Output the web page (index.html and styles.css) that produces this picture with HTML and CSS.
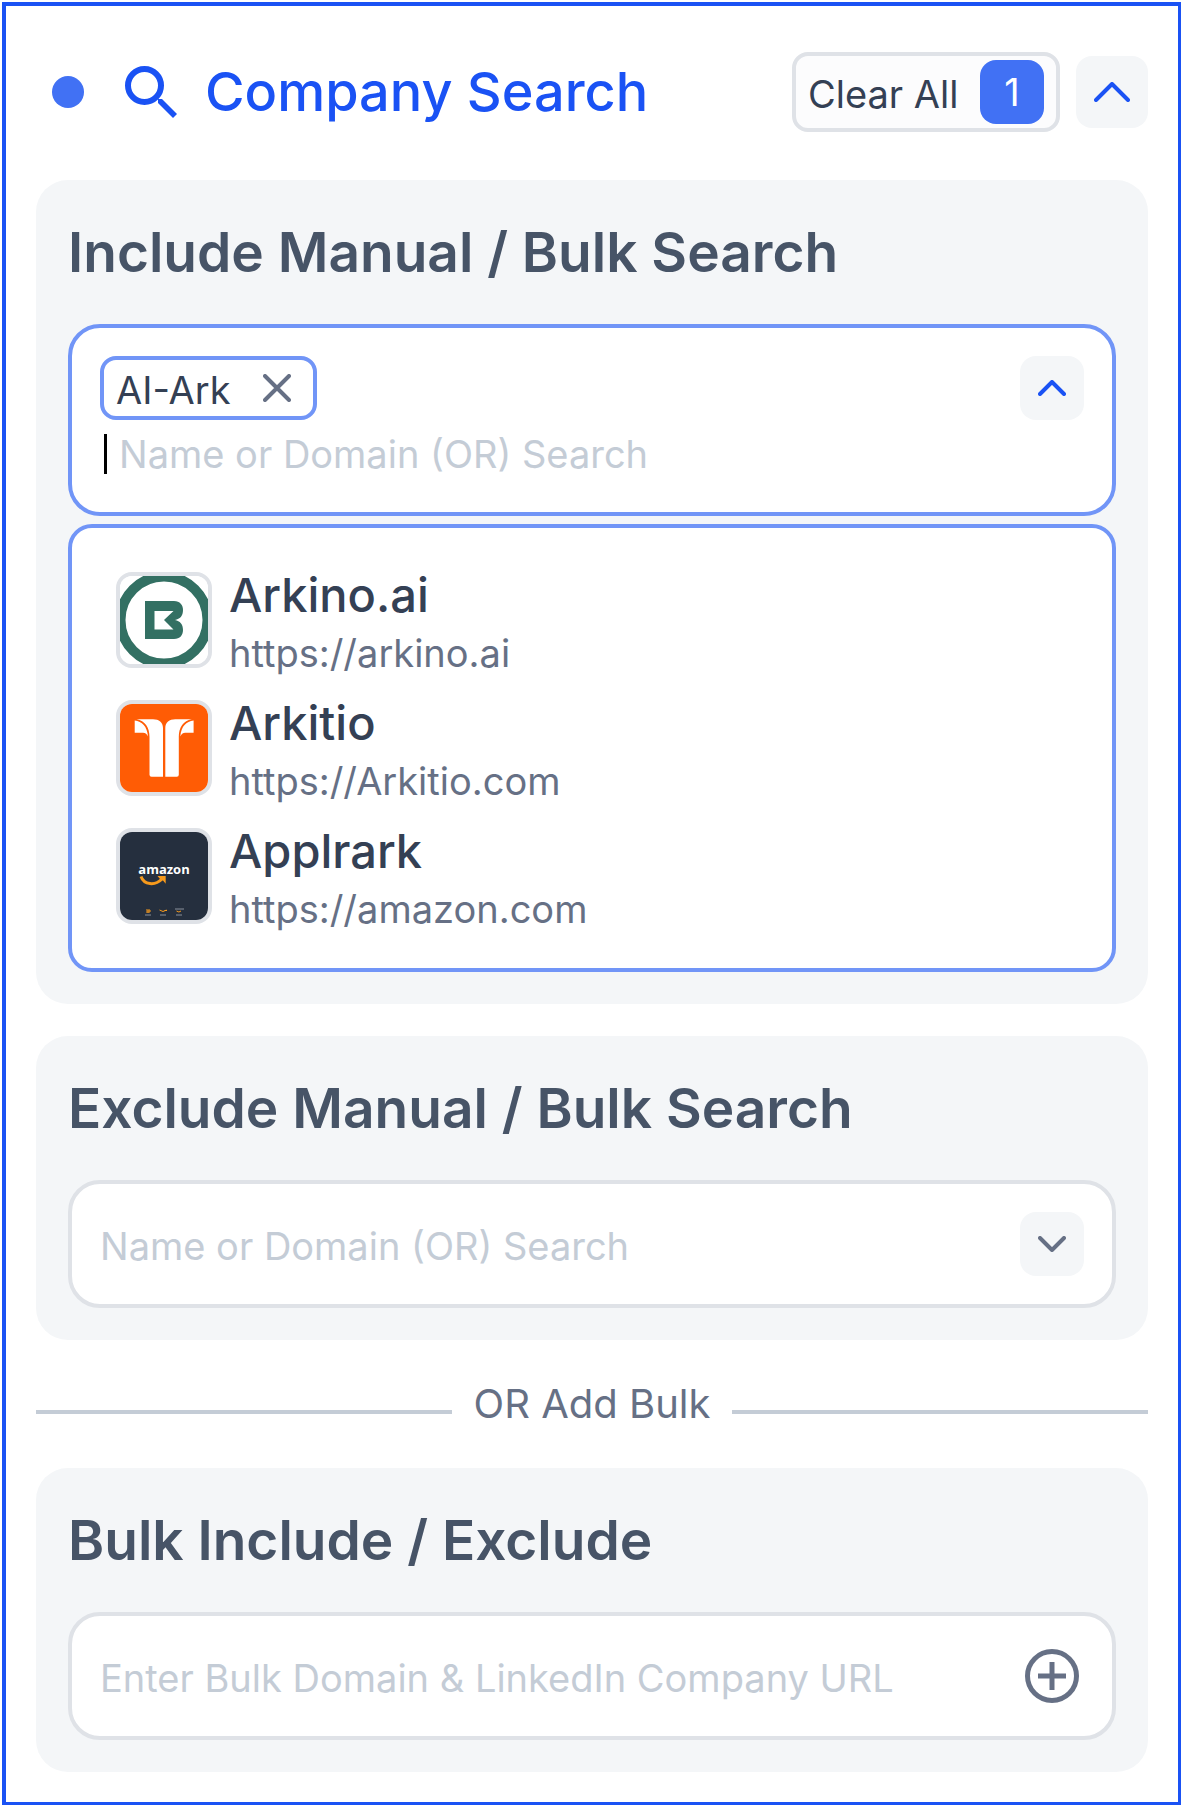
FILE: index.html
```html
<!DOCTYPE html>
<html lang="en">
    <head>
        <meta charset="utf-8">
        <meta name="viewport" content="width=device-width, initial-scale=1">
        <title>Company Search</title>
        <link rel="stylesheet" href="styles.css">
    </head>
    <body>
        <main class="filter">
            <header class="filter-header">
                <span class="filter-dot"></span>
                <svg class="filter-icon" viewBox="0 0 52 52" aria-hidden="true">
                    <circle cx="19.500" cy="19.500" r="16.500" fill="none" stroke="currentColor" stroke-width="6"/>
                    <path d="M33 33H37L52 48L48 52L33 37Z" fill="currentColor"/>
                </svg>
                <h1 class="filter-title">Company Search</h1>
                <button class="clear" type="button"><span class="clear-label">Clear All</span> <span class="clear-count">1</span></button>
                <button class="toggle toggle-large" type="button" aria-label="Collapse">
                    <svg width="36" height="20" viewBox="0 0 36 20"><path d="M2 18L18 2L34 18"/></svg>
                </button>
            </header>

            <section class="panel">
                <h2 class="panel-title"><label for="include">Include Manual / Bulk Search</label></h2>
                <div class="field field-active">
                    <div class="field-body">
                        <span class="chip">
                            <span class="chip-label">AI-Ark</span>
                            <button class="chip-remove" type="button" aria-label="Remove AI-Ark">
                                <svg width="28" height="28" viewBox="0 0 28 28"><path d="M2 2L26 26M26 2L2 26"/></svg>
                            </button>
                        </span>
                        <div class="field-line">
                            <span class="caret"></span>
                            <input class="field-input" id="include" type="text" placeholder="Name or Domain (OR) Search">
                        </div>
                    </div>
                    <button class="toggle" type="button" aria-label="Close list">
                        <svg width="28" height="16" viewBox="0 0 28 16"><path d="M2 14L14 2L26 14"/></svg>
                    </button>
                </div>

                <ul class="options">
                    <li>
                        <button class="option" type="button">
                            <svg class="option-logo" viewBox="0 0 88 88" aria-hidden="true">
                                <rect width="88" height="88" fill="#fff"/>
                                <circle cx="44" cy="44" r="43.500" fill="none" stroke="#337063" stroke-width="10"/>
                                <path fill="#337063" fill-rule="evenodd" d="M25 25H54C60 25 63 29 63 34C63 40 60 43 55 44C60 45 63 48 63 54C63 59 60 63 54 63H25ZM34.500 35V53.500H53.500L44 44L53.500 35Z"/>
                            </svg>
                            <span class="option-text">
                                <span class="option-name">Arkino.ai</span>
                                <span class="option-url">https://arkino.ai</span>
                            </span>
                        </button>
                    </li>
                    <li>
                        <button class="option" type="button">
                            <svg class="option-logo" viewBox="0 0 88 88" aria-hidden="true">
                                <rect width="88" height="88" fill="#ff5c05"/>
                                <g fill="#fff">
                                    <path d="M14.700 16.500C22 17.500 27 22 28 32.500C27 30 25.500 28.700 23 28.700H14.700Z"/>
                                    <path d="M16.500 15.300H33C39 15.300 43 18.500 43 24V72.700H31.500Q29.500 72.700 29.500 70.700V33C29.500 23 25 17 16.500 15.300Z"/>
                                </g>
                                <g fill="#fff" transform="translate(88.300 0) scale(-1 1)">
                                    <path d="M14.700 16.500C22 17.500 27 22 28 32.500C27 30 25.500 28.700 23 28.700H14.700Z"/>
                                    <path d="M16.500 15.300H33C39 15.300 43 18.500 43 24V72.700H31.500Q29.500 72.700 29.500 70.700V33C29.500 23 25 17 16.500 15.300Z"/>
                                </g>
                            </svg>
                            <span class="option-text">
                                <span class="option-name">Arkitio</span>
                                <span class="option-url">https://Arkitio.com</span>
                            </span>
                        </button>
                    </li>
                    <li>
                        <button class="option" type="button">
                            <svg class="option-logo" viewBox="0 0 88 88" aria-hidden="true">
                                <rect width="88" height="88" fill="#252f3e"/>
                                <text class="logo-word" x="44" y="42" text-anchor="middle">amazon</text>
                                <path d="M21 44.500C24 53 35 54 42 47" fill="none" stroke="#f79a1c" stroke-width="3"/>
                                <path d="M37.500 44H45.700V51.700L43 48.500L40 47Z" fill="#f79a1c"/>
                                <g fill="none" stroke="#f79a1c">
                                    <path d="M26 78H30V80H26M28 78V81"/>
                                    <path d="M39.500 78Q43 81 46.500 78M44.500 78.500H47"/>
                                    <path d="M56.500 79Q59 81 61 79"/>
                                </g>
                                <path d="M25 83H31M40 83H46M56 83H62M55 77H64" stroke="#8a919b"/>
                            </svg>
                            <span class="option-text">
                                <span class="option-name">Applrark</span>
                                <span class="option-url">https://amazon.com</span>
                            </span>
                        </button>
                    </li>
                </ul>
            </section>

            <section class="panel">
                <h2 class="panel-title"><label for="exclude">Exclude Manual / Bulk Search</label></h2>
                <div class="field">
                    <input class="field-input" id="exclude" type="text" placeholder="Name or Domain (OR) Search">
                    <button class="toggle toggle-closed" type="button" aria-label="Open list">
                        <svg width="28" height="16" viewBox="0 0 28 16"><path d="M2 2L14 14L26 2"/></svg>
                    </button>
                </div>
            </section>

            <div class="divider">OR Add Bulk</div>

            <section class="panel">
                <h2 class="panel-title"><label for="bulk">Bulk Include / Exclude</label></h2>
                <div class="field">
                    <input class="field-input" id="bulk" type="text" placeholder="Enter Bulk Domain &amp; LinkedIn Company URL">
                    <button class="add" type="button" aria-label="Add">
                        <svg width="54" height="54" viewBox="0 0 54 54"><circle cx="27" cy="27" r="24.500"/><path d="M27 13V41M13 27H41"/></svg>
                    </button>
                </div>
            </section>
        </main>
    </body>
</html>
```
FILE: styles.css
```css
* {
    box-sizing: border-box;
}
body {
    margin: 2px 0 0 2px;
    background: #fff;
    color: #344054;
    font-family: Inter, "Liberation Sans", sans-serif;
    font-size: 38px;
    line-height: 48px;
}
button, input {
    padding: 0;
    border: 0;
    background: none;
    color: inherit;
    font: inherit;
}
svg {
    display: block;
    flex-shrink: 0;
}

.filter {
    padding: 46px 30px 30px;
    border: 4px solid #1a52f4;
    border-right-width: 3px;
    border-bottom-width: 3px; }
.filter-header {
    display: flex;
    align-items: center;
    height: 80px;
    padding-left: 16px;
    margin-bottom: 48px;
    color: #1a52f4; }
.filter-dot {
    width: 32px;
    height: 32px;
    border-radius: 50%;
    background: #4171f4; }
.filter-icon {
    width: 52px;
    height: 52px;
    margin: 0 28px 0 41px; }
.filter-title {
    flex: 1;
    margin: 0;
    font-size: 54px;
    font-weight: 500;
    line-height: 64px; }

.clear {
    display: flex;
    align-items: center;
    justify-content: space-between;
    width: 268px;
    height: 80px;
    padding: 0 12px;
    margin-right: 16px;
    border: 4px solid #dfe2e7;
    border-radius: 16px;
    background: #fcfcfd;
    color: #344054; }
.clear-label, .chip-label {
    padding-top: 4px; }
.clear-count {
    width: 64px;
    height: 64px;
    border-radius: 16px;
    background: #4171f4;
    color: #fff;
    line-height: 64px; }

.toggle {
    display: flex;
    align-items: center;
    justify-content: center;
    width: 64px;
    height: 64px;
    border-radius: 16px;
    background: #f4f6f8;
    color: #1a52f4; }
    .toggle-large {
        width: 72px;
        height: 72px; }
    .toggle-closed {
        color: #667085; }
.toggle path, .chip-remove path {
    fill: none;
    stroke: currentColor;
    stroke-width: 4px;
    stroke-linecap: round;
    stroke-linejoin: round; }

.panel {
    padding: 32px;
    border-radius: 32px;
    background: #f4f6f8; }
.panel + .panel {
    margin-top: 32px; }
.panel-title {
    margin: 8px 0 40px;
    color: #475467;
    font-size: 55px;
    font-weight: 600;
    line-height: 64px; }

.field {
    display: flex;
    align-items: flex-start;
    padding: 28px;
    border: 4px solid #dfe2e7;
    border-radius: 32px;
    background: #fff; }
    .field-active {
        border-color: #7195f7; }
.field-body {
    flex: 1;
    min-width: 0; }
.field-line {
    display: flex;
    align-items: center;
    gap: 12px;
    padding: 4px; }
.field-input {
    flex: 1;
    min-width: 0;
    height: 64px;
    padding-top: 4px;
    outline: none; }
.field-line .field-input {
    height: 56px; }
.field-input::placeholder {
    color: #c4ccd6;
    opacity: 1; }
.caret {
    width: 3px;
    height: 40px;
    margin-top: 4px;
    background: #000; }

.chip {
    display: inline-flex;
    align-items: center;
    gap: 32px;
    height: 64px;
    padding: 0 22px 0 12px;
    border: 4px solid #7195f7;
    border-radius: 16px;
    vertical-align: top; }
.chip-remove {
    color: #667085; }

.options {
    display: flex;
    flex-direction: column;
    gap: 32px;
    margin: 8px 0 0;
    padding: 44px;
    border: 4px solid #7195f7;
    border-radius: 24px;
    background: #fff;
    list-style: none; }
.option {
    display: flex;
    align-items: center;
    gap: 17px;
    width: 100%;
    height: 96px;
    text-align: left; }
.option-logo {
    width: 96px;
    height: 96px;
    border: 4px solid #dfe2e7;
    border-radius: 16px; }
.option-text {
    display: flex;
    flex-direction: column;
    gap: 2px; }
.option-name {
    font-size: 47px;
    font-weight: 500;
    line-height: 64px; }
.option-url {
    color: #667085; }
.logo-word {
    fill: #fff;
    font-family: "Open Sans", sans-serif;
    font-size: 13px;
    font-weight: 700; }

.divider {
    display: flex;
    align-items: center;
    gap: 22px;
    padding: 40px 0;
    color: #667085;
    font-size: 40px; }
/* rules run a little below the middle of the label */
.divider::before, .divider::after {
    content: "";
    flex: 1;
    height: 4px;
    margin-top: 16px;
    background: #c4ccd6; }

.add {
    display: flex;
    align-items: center;
    justify-content: center;
    width: 64px;
    height: 64px;
    color: #667085; }
.add svg {
    fill: none;
    stroke: currentColor;
    stroke-width: 5px; }
```
